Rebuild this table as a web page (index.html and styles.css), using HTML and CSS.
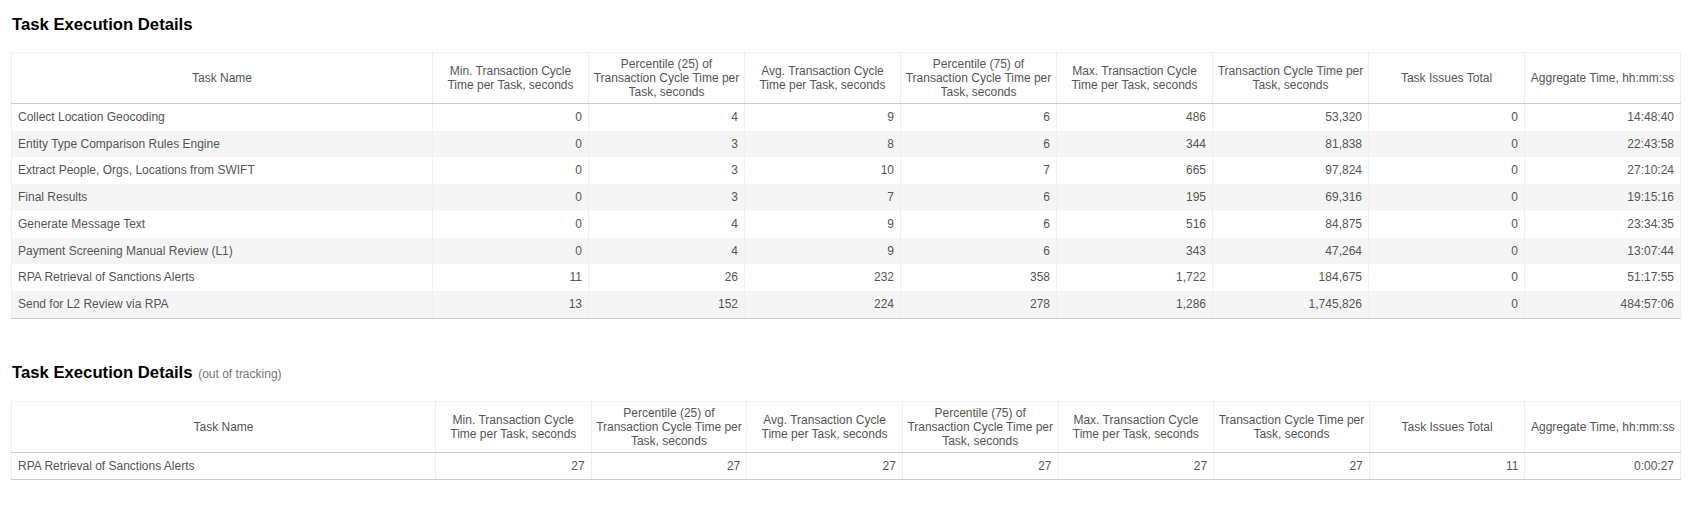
FILE: index.html
```html
<!DOCTYPE html>
<html lang="en">
<head>
<meta charset="utf-8">
<title>Task Execution Details</title>
<link rel="stylesheet" href="styles.css">
</head>
<body>
<div class="page">
  <section class="block">
    <h2 class="title">Task Execution Details</h2>
    <table class="grid">
      <colgroup>
        <col class="col-name-a">
        <col><col><col><col><col><col><col><col>
      </colgroup>
      <thead>
        <tr>
          <th>Task Name</th>
          <th>Min. Transaction Cycle<br>Time per Task, seconds</th>
          <th>Percentile (25) of<br>Transaction Cycle Time per<br>Task, seconds</th>
          <th>Avg. Transaction Cycle<br>Time per Task, seconds</th>
          <th>Percentile (75) of<br>Transaction Cycle Time per<br>Task, seconds</th>
          <th>Max. Transaction Cycle<br>Time per Task, seconds</th>
          <th>Transaction Cycle Time per<br>Task, seconds</th>
          <th>Task Issues Total</th>
          <th>Aggregate Time, hh:mm:ss</th>
        </tr>
      </thead>
      <tbody>
        <tr><td class="name">Collect Location Geocoding</td><td>0</td><td>4</td><td>9</td><td>6</td><td>486</td><td>53,320</td><td>0</td><td>14:48:40</td></tr>
        <tr><td class="name">Entity Type Comparison Rules Engine</td><td>0</td><td>3</td><td>8</td><td>6</td><td>344</td><td>81,838</td><td>0</td><td>22:43:58</td></tr>
        <tr><td class="name">Extract People, Orgs, Locations from SWIFT</td><td>0</td><td>3</td><td>10</td><td>7</td><td>665</td><td>97,824</td><td>0</td><td>27:10:24</td></tr>
        <tr><td class="name">Final Results</td><td>0</td><td>3</td><td>7</td><td>6</td><td>195</td><td>69,316</td><td>0</td><td>19:15:16</td></tr>
        <tr><td class="name">Generate Message Text</td><td>0</td><td>4</td><td>9</td><td>6</td><td>516</td><td>84,875</td><td>0</td><td>23:34:35</td></tr>
        <tr><td class="name">Payment Screening Manual Review (L1)</td><td>0</td><td>4</td><td>9</td><td>6</td><td>343</td><td>47,264</td><td>0</td><td>13:07:44</td></tr>
        <tr><td class="name">RPA Retrieval of Sanctions Alerts</td><td>11</td><td>26</td><td>232</td><td>358</td><td>1,722</td><td>184,675</td><td>0</td><td>51:17:55</td></tr>
        <tr><td class="name">Send for L2 Review via RPA</td><td>13</td><td>152</td><td>224</td><td>278</td><td>1,286</td><td>1,745,826</td><td>0</td><td>484:57:06</td></tr>
      </tbody>
    </table>
  </section>

  <section class="block block-second">
    <h2 class="title">Task Execution Details <span class="sub">(out of tracking)</span></h2>
    <table class="grid">
      <colgroup>
        <col class="col-name-b">
        <col><col><col><col><col><col><col><col>
      </colgroup>
      <thead>
        <tr>
          <th>Task Name</th>
          <th>Min. Transaction Cycle<br>Time per Task, seconds</th>
          <th>Percentile (25) of<br>Transaction Cycle Time per<br>Task, seconds</th>
          <th>Avg. Transaction Cycle<br>Time per Task, seconds</th>
          <th>Percentile (75) of<br>Transaction Cycle Time per<br>Task, seconds</th>
          <th>Max. Transaction Cycle<br>Time per Task, seconds</th>
          <th>Transaction Cycle Time per<br>Task, seconds</th>
          <th>Task Issues Total</th>
          <th>Aggregate Time, hh:mm:ss</th>
        </tr>
      </thead>
      <tbody>
        <tr><td class="name">RPA Retrieval of Sanctions Alerts</td><td>27</td><td>27</td><td>27</td><td>27</td><td>27</td><td>27</td><td>11</td><td>0:00:27</td></tr>
      </tbody>
    </table>
  </section>
</div>
</body>
</html>
```

FILE: styles.css
```css
html, body {
  margin: 0;
  padding: 0;
  background: #ffffff;
}

body {
  font-family: "Liberation Sans", Arial, sans-serif;
  color: #555555;
}

.page {
  padding: 15px 18px 0 11px;
}

.block-second {
  margin-top: 44px;
}

.title {
  margin: 0 0 0 1px;
  font-size: 16.7px;
  line-height: 20px;
  font-weight: bold;
  color: #000000;
}

.sub {
  font-size: 12px;
  font-weight: normal;
  color: #777777;
  margin-left: 1px;
}

.grid {
  margin-top: 17px;
  width: 1670px;
  table-layout: fixed;
  border-collapse: collapse;
  font-size: 12px;
  color: #555555;
}

.col-name-a {
  width: 421px;
}

.col-name-b {
  width: 424px;
}

.grid th {
  font-weight: normal;
  text-align: center;
  vertical-align: middle;
  line-height: 14px;
  padding: 4px 2px;
  height: 42px;
  white-space: nowrap;
  overflow: hidden;
  border-top: 1px solid #f2f2f2;
  border-left: 1px solid #efefef;
  border-right: 1px solid #efefef;
  border-bottom: 1px solid #cccccc;
}

.grid td {
  text-align: right;
  line-height: 14.7px;
  padding: 6px 6px;
  border-left: 1px solid #efefef;
  border-right: 1px solid #efefef;
  white-space: nowrap;
}

.grid td.name {
  text-align: left;
}

.grid tbody tr:nth-child(even) td {
  background: #f5f5f5;
}

.grid tbody tr:last-child td {
  border-bottom: 1px solid #cccccc;
}
```
